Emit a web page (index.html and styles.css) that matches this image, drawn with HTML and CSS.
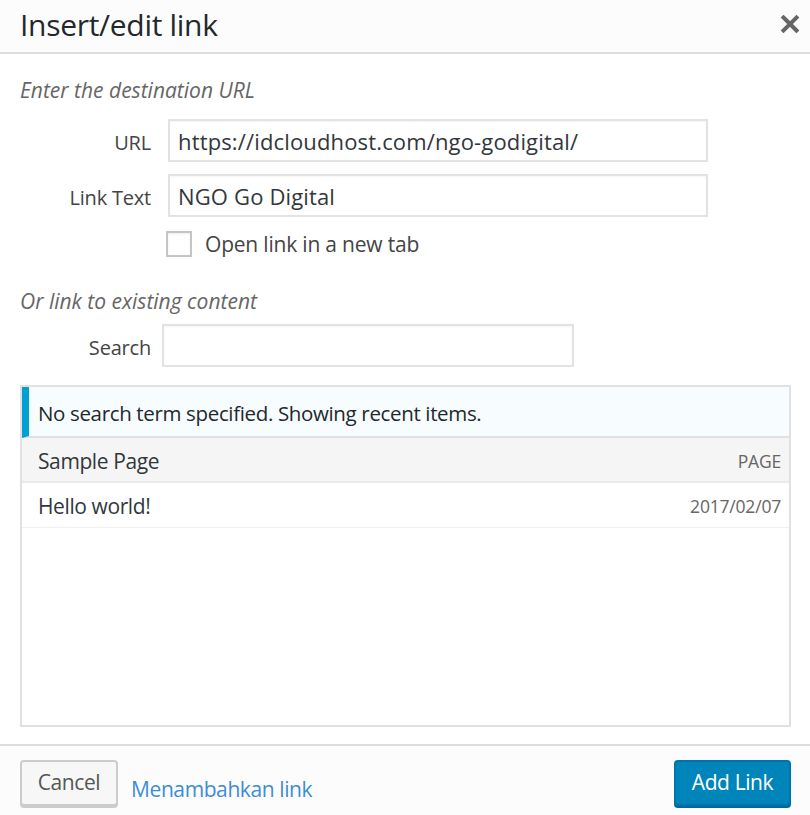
FILE: index.html
```html
<!DOCTYPE html>
<html>
<head>
<meta charset="utf-8">
<link rel="stylesheet" href="styles.css">
</head>
<body>
<div class="dialog">
  <div class="header">
    <h1 class="title">Insert/edit link</h1>
    <button class="close" aria-label="Close">
      <svg width="20" height="20" viewBox="0 0 20 20"><path d="M3.5 3.5 L16.5 16.5 M16.5 3.5 L3.5 16.5" stroke="#666" stroke-width="4" stroke-linecap="square"/></svg>
    </button>
  </div>
  <div class="content">
    <p class="hint first">Enter the destination URL</p>
    <div class="row">
      <label class="label">URL</label>
      <div class="input wide">https://idcloudhost.com/ngo-godigital/</div>
    </div>
    <div class="row">
      <label class="label">Link Text</label>
      <div class="input wide">NGO Go Digital</div>
    </div>
    <div class="check-row">
      <span class="checkbox"></span>
      <span class="check-label">Open link in a new tab</span>
    </div>
    <p class="hint second">Or link to existing content</p>
    <div class="row search-row">
      <label class="label">Search</label>
      <div class="input search"></div>
    </div>
    <div class="results">
      <div class="notice">No search term specified. Showing recent items.</div>
      <div class="item alt"><span class="item-title">Sample Page</span><span class="item-info">PAGE</span></div>
      <div class="item"><span class="item-title">Hello world!</span><span class="item-info">2017/02/07</span></div>
    </div>
  </div>
  <div class="footer">
    <div class="footer-left">
      <button class="btn cancel">Cancel</button>
      <a class="footer-link">Menambahkan link</a>
    </div>
    <button class="btn primary">Add Link</button>
  </div>
</div>
</body>
</html>
```
FILE: styles.css
```css
* { box-sizing: border-box; }
html, body { margin: 0; padding: 0; }
body {
  width: 810px;
  height: 815px;
  background: #fff;
  font-family: "Open Sans", "Noto Sans", sans-serif;
  color: #444;
  overflow: hidden;
}
.dialog {
  display: flex;
  flex-direction: column;
  height: 815px;
}
.header {
  height: 54px;
  background: #fcfcfc;
  border-bottom: 2px solid #ddd;
  display: flex;
  align-items: center;
  justify-content: space-between;
  padding: 0 10px 4px 20px;
}
.title {
  margin: 0;
  font-size: 30px;
  font-weight: 400;
  color: #23282d;
  letter-spacing: -0.3px;
}
.close {
  border: 0;
  background: none;
  padding: 0;
  width: 20px;
  height: 20px;
}
.content {
  flex: 1;
  padding: 0 19px 0 20px;
}
.hint {
  margin: 0;
  font-style: italic;
  font-size: 21px;
  color: #666;
  letter-spacing: 0;
}
.hint.first { margin-top: 23px; height: 26px; line-height: 26px; }
.hint.second { margin-top: 30px; height: 26px; line-height: 26px; }
.row {
  display: flex;
  align-items: center;
  margin-top: 12px;
}
.hint.first + .row { margin-top: 16px; }
.label {
  width: 131px;
  text-align: right;
  font-size: 20px;
  color: #444;
  letter-spacing: -0.2px;
  padding-top: 4px;
}
.input {
  border: 2px solid #e2e2e2;
  background: #fff;
  height: 43px;
  font-size: 22px;
  color: #32373c;
  line-height: 41px;
  padding: 0 8px;
  letter-spacing: 0.15px;
  box-shadow: inset 0 1px 2px rgba(0,0,0,0.04);
  white-space: nowrap;
  overflow: hidden;
}
.input.wide { width: 540px; margin-left: 17px; }
.input.search { width: 412px; margin-left: 11px; }
.search-row { margin-top: 10px; }
.check-row {
  display: flex;
  align-items: center;
  margin: 13px 0 0 146px;
  height: 28px;
}
.checkbox {
  width: 26px;
  height: 26px;
  border: 2px solid #c5c5c5;
  background: #fff;
  box-shadow: inset 0 1px 2px rgba(0,0,0,0.08);
}
.check-label {
  margin-left: 13px;
  font-size: 21px;
  color: #444;
  letter-spacing: -0.2px;
}
.results {
  margin-top: 18px;
  height: 342px;
  border: 2px solid #e1e1e1;
  background: #fff;
}
.notice {
  height: 51px;
  background: #f7fcfe;
  border-left: 7px solid #00a0d2;
  border-bottom: 2px solid #e1e1e1;
  font-size: 20.5px;
  color: #23282d;
  line-height: 53px;
  padding-left: 9px;
  letter-spacing: -0.35px;
}
.item {
  height: 45px;
  display: flex;
  align-items: center;
  justify-content: space-between;
  padding: 2px 8px 0 16px;
  border-bottom: 1px solid #f1f1f1;
  font-size: 21px;
  color: #32373c;
}
.item.alt { background: #f5f5f5; border-bottom: 2px solid #eaeaea; }
.item-title { letter-spacing: -0.4px; }
.item-info {
  font-size: 17.5px;
  color: #666;
  letter-spacing: -0.2px;
}
.footer {
  height: 71px;
  background: #fcfcfc;
  border-top: 2px solid #ddd;
  display: flex;
  align-items: center;
  justify-content: space-between;
  padding: 5px 19px 0 20px;
}
.footer-left { display: flex; align-items: center; }
.btn {
  font-family: "Open Sans", "Noto Sans", sans-serif;
  height: 46px;
  border-radius: 4px;
  font-size: 21px;
  padding: 0 0 3px;
  letter-spacing: -0.4px;
}
.cancel {
  width: 98px;
  background: #f7f7f7;
  border: 2px solid #cccccc;
  color: #555;
  box-shadow: 0 2px 0 #ccc;
}
.footer-link {
  margin-left: 13px;
  margin-top: 12px;
  font-size: 21px;
  color: #3c8dd6;
  letter-spacing: -0.4px;
}
.primary {
  width: 117px;
  background: #0085ba;
  border: 2px solid #0073aa;
  color: #fff;
  box-shadow: 0 2px 0 #006799;
}
```
